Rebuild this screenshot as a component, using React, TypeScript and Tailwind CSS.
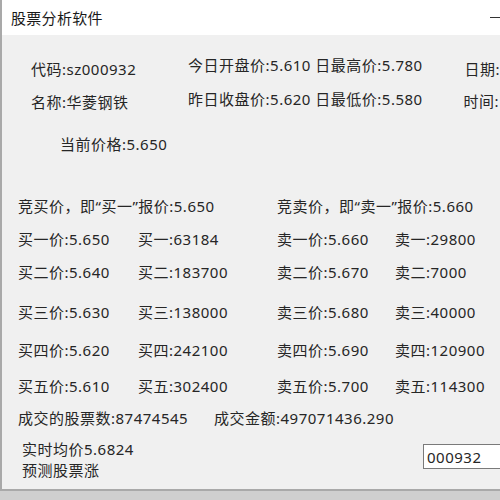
import React from 'react';

const font = { fontFamily: '"Noto Sans", "Noto Sans CJK SC", sans-serif' };

const bids = [
  ['买一价:5.650', '买一:63184', '卖一价:5.660', '卖一:29800'],
  ['买二价:5.640', '买二:183700', '卖二价:5.670', '卖二:7000'],
  ['买三价:5.630', '买三:138000', '卖三价:5.680', '卖三:40000'],
  ['买四价:5.620', '买四:242100', '卖四价:5.690', '卖四:120900'],
  ['买五价:5.610', '买五:302400', '卖五价:5.700', '卖五:114300'],
];

// gap above each quote row, the form spacing is uneven
const rowGaps = ['mt-[11px]', 'mt-[11px]', 'mt-[18px]', 'mt-[16px]', 'mt-[14px]'];

export default function App() {
  return (
    <div
      className="w-[500px] h-[500px] overflow-hidden bg-[#cfcfcf] text-[15px] tracking-[0.5px] text-[#262626] leading-[22px]"
      style={font}
    >
      <div className="h-[491px] border-l-2 border-b-2 border-[#a9a9a9] bg-[#f0f0f0] flex flex-col">
        {/* title bar */}
        <div className="h-[35px] bg-white flex items-center justify-between pl-[9px]">
          <span className="text-[15px] tracking-[0.3px] text-[#1a1a1a]">股票分析软件</span>
          <span className="w-[12px] h-[1px] bg-[#333] mr-[-2px]" />
        </div>

        {/* header info */}
        <div className="flex mt-[22px]">
          <div className="w-[187px] pl-[29px] flex flex-col gap-[11px] pt-[1px]">
            <span>代码:sz000932</span>
            <span>名称:华菱钢铁</span>
          </div>
          <div className="w-[278px] flex flex-col gap-[12px] mt-[-3px]">
            <span className="whitespace-nowrap">今日开盘价:5.610 日最高价:5.780</span>
            <span className="whitespace-nowrap">昨日收盘价:5.620 日最低价:5.580</span>
          </div>
          <div className="flex flex-col gap-[10px] pt-[1px] whitespace-nowrap">
            <span>日期:</span>
            <span className="ml-[-1px]">时间:</span>
          </div>
        </div>
        <div className="pl-[58px] mt-[20px]">当前价格:5.650</div>

        {/* bid / ask */}
        <div className="flex mt-[40px] pl-[16px]">
          <span className="w-[259px] whitespace-nowrap">竞买价，即“买一”报价:5.650</span>
          <span className="whitespace-nowrap">竞卖价，即“卖一”报价:5.660</span>
        </div>
        {bids.map((row, i) => (
          <div key={i} className={`flex pl-[16px] whitespace-nowrap ${rowGaps[i]}`}>
            <span className="w-[120px]">{row[0]}</span>
            <span className="w-[139px]">{row[1]}</span>
            <span className="w-[118px]">{row[2]}</span>
            <span>{row[3]}</span>
          </div>
        ))}

        <div className="flex pl-[16px] mt-[10px] whitespace-nowrap">
          <span className="w-[196px]">成交的股票数:87474545</span>
          <span>成交金额:497071436.290</span>
        </div>

        <div className="flex justify-between mt-[10px]">
          <div className="pl-[20px] flex flex-col leading-[21px]">
            <span>实时均价5.6824</span>
            <span>预测股票涨</span>
          </div>
          <input
            readOnly
            value="000932"
            className="w-[80px] h-[25px] mt-[5px] mr-[-3px] bg-white border border-[#7a7a7a] px-[3px] text-[15px] tracking-[0.5px] text-[#262626] outline-none"
            style={font}
          />
        </div>
      </div>
    </div>
  );
}
